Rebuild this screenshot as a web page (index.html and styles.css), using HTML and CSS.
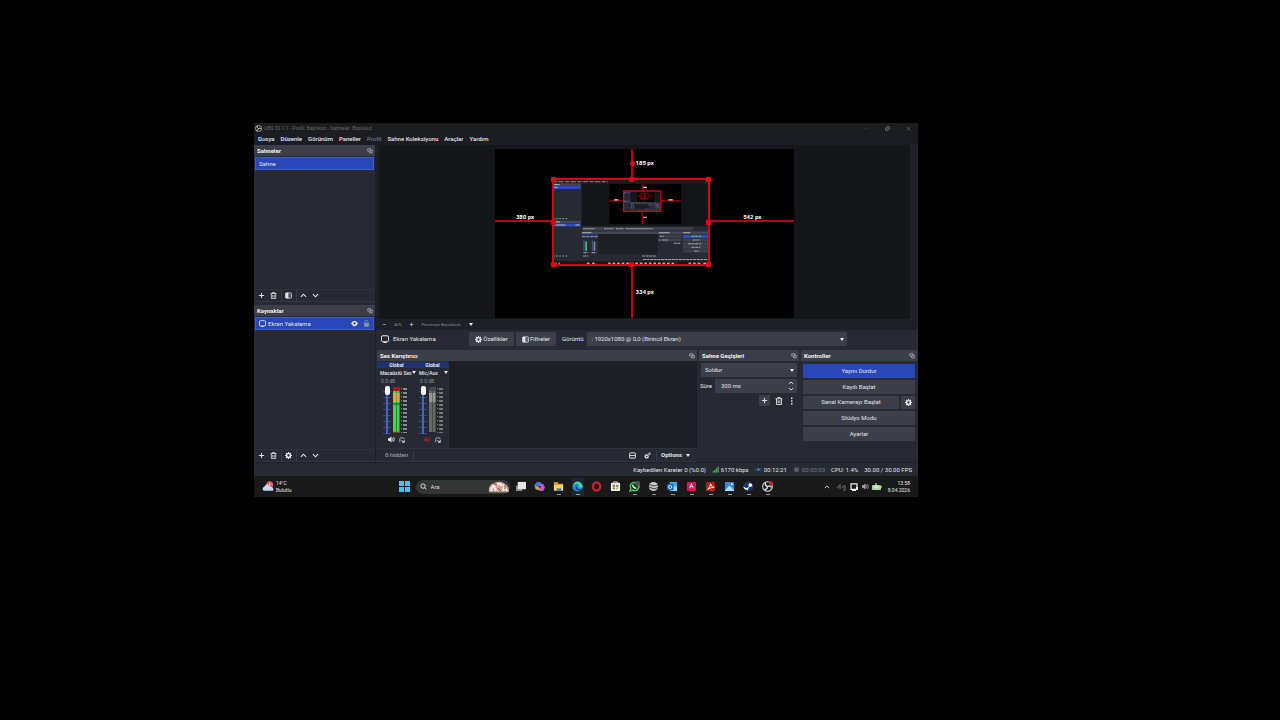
FILE: index.html
```html
<!DOCTYPE html>
<html lang="tr">

<head>
  <meta charset="UTF-8" />
  <title>OBS Studio</title>
  <link rel="stylesheet" href="styles.css">
</head>

<body>
  <!-- shared icons -->
  <svg class="sprite" aria-hidden="true">
    <symbol id="plus" viewBox="0 0 16 16"><path d="M8 2v12M2 8h12" stroke="currentColor" stroke-width="2.2" /></symbol>
    <symbol id="trash" viewBox="0 0 16 16"><path d="M1 3.5h14M5.5 3V1h5v2M3 4v11h10V4M6.3 6.5v6M9.7 6.5v6" fill="none" stroke="currentColor" stroke-width="1.8" /></symbol>
    <symbol id="filter" viewBox="0 0 16 16"><rect x="1" y="2" width="14" height="12" rx="2" fill="none" stroke="currentColor" stroke-width="1.8" /><path d="M2 2h6v12H2z" fill="currentColor" /><path d="M10 5h3M10 8h3M10 11h3" stroke="currentColor" /></symbol>
    <symbol id="up" viewBox="0 0 16 16"><path d="M2 11l6-6 6 6" fill="none" stroke="currentColor" stroke-width="2.4" /></symbol>
    <symbol id="down" viewBox="0 0 16 16"><path d="M2 5l6 6 6-6" fill="none" stroke="currentColor" stroke-width="2.4" /></symbol>
    <symbol id="gear" viewBox="0 0 16 16"><circle cx="8" cy="8" r="4.3" fill="none" stroke="currentColor" stroke-width="3.4" /><path d="M8 0v3M8 13v3M0 8h3M13 8h3M2.3 2.3l2 2M11.7 11.7l2 2M13.7 2.3l-2 2M4.3 11.7l-2 2" stroke="currentColor" stroke-width="2.6" /></symbol>
    <symbol id="gears" viewBox="0 0 16 16"><circle cx="6" cy="10" r="3.5" fill="none" stroke="currentColor" stroke-width="3" /><circle cx="12.5" cy="4" r="2" fill="none" stroke="currentColor" stroke-width="2" /></symbol>
    <symbol id="popout" viewBox="0 0 16 16"><path d="M2 2h8v6H2zM7 8v5h7V6h-4" fill="none" stroke="currentColor" stroke-width="2" /></symbol>
    <symbol id="monitor" viewBox="0 0 16 16"><rect x="1" y="1.5" width="14" height="12" rx="2.5" fill="none" stroke="currentColor" stroke-width="2" /><path d="M5 15h6" stroke="currentColor" stroke-width="2" /></symbol>
    <symbol id="eye" viewBox="0 0 16 16"><path d="M0 8q8-13 16 0q-8 13-16 0z" fill="currentColor" /><circle cx="8" cy="8" r="2.6" fill="#2a47b8" /></symbol>
    <symbol id="lock" viewBox="0 0 16 16"><path d="M4.5 8V4.500a3.500 3.500 0 0 1 7 0V8" fill="none" stroke="currentColor" stroke-width="2" /><rect x="2.500" y="7" width="11" height="8.500" rx="1" fill="currentColor" /></symbol>
    <symbol id="dots" viewBox="0 0 16 16"><path d="M6 1h3v3H6zM6 6.500h3v3H6zM6 12h3v3H6z" fill="currentColor" /></symbol>
    <symbol id="speaker" viewBox="0 0 16 16"><path d="M0 5h3l5-4v14l-5-4H0z" fill="currentColor" /><path d="M10 5q2 3 0 6M12.500 2.500q4 5.500 0 11" fill="none" stroke="currentColor" stroke-width="1.800" /></symbol>
    <symbol id="headphones" viewBox="0 0 16 16"><path d="M2 14V6q0-4 4-4h4q4 0 4 4" fill="none" stroke="currentColor" stroke-width="1.800" /><path d="M6 9l8 5M14 8v6H8" fill="none" stroke="currentColor" stroke-width="2.200" /></symbol>
    <symbol id="layout" viewBox="0 0 16 16"><rect x="1.500" y="2" width="13" height="12" rx="1" fill="none" stroke="currentColor" stroke-width="2.200" /><path d="M2 8h12" stroke="currentColor" stroke-width="2" /></symbol>
    <symbol id="obs" viewBox="0 0 16 16"><circle cx="8" cy="8" r="7" fill="#151515" stroke="#ddd" stroke-width="1.500" /><path d="M8 8Q4 7 5 2.500M8 8q4-2 6 1.500M8 8q0 4-4.500 4.500" fill="none" stroke="#ddd" stroke-width="2" /></symbol>
  </svg>

  <div class="desktop">
    <header class="titlebar">
      <svg class="icon"><use href="#obs" /></svg>
      <span class="title">OBS 32.1.1 - Profil: Başlıksız - Sahneler: Başlıksız</span>
      <button class="win-btn" aria-label="Simge durumu"><svg viewBox="0 0 8 8"><path d="M1 4h6" stroke="#333" /></svg></button>
      <button class="win-btn" aria-label="Önceki boyut"><svg viewBox="0 0 8 8"><path d="M1 3h4v4H1zM3 1h4v4" fill="none" stroke="#999" /></svg></button>
      <button class="win-btn" aria-label="Kapat"><svg viewBox="0 0 8 8"><path d="M1 1l6 6M7 1L1 7" stroke="#777" /></svg></button>
    </header>

    <nav class="menubar">
      <a href="#">Dosya</a>
      <a href="#">Düzenle</a>
      <a href="#">Görünüm</a>
      <a href="#">Paneller</a>
      <a href="#" class="dim">Profil</a>
      <a href="#">Sahne Koleksiyonu</a>
      <a href="#">Araçlar</a>
      <a href="#">Yardım</a>
    </nav>

    <main class="workspace">
      <aside class="sidebar">
        <section class="dock">
          <h2 class="dock-head">Sahneler <svg class="icon-sm"><use href="#popout" /></svg></h2>
          <div class="list"><button class="row">Sahne</button></div>
          <div class="toolbar">
            <button aria-label="Sahne ekle"><svg class="icon"><use href="#plus" /></svg></button>
            <button aria-label="Sahneyi sil"><svg class="icon"><use href="#trash" /></svg></button>
            <button class="split" aria-label="Filtreler"><svg class="icon"><use href="#filter" /></svg></button>
            <button class="split" aria-label="Yukarı"><svg class="icon"><use href="#up" /></svg></button>
            <button aria-label="Aşağı"><svg class="icon"><use href="#down" /></svg></button>
          </div>
        </section>
        <section class="dock">
          <h2 class="dock-head">Kaynaklar <svg class="icon-sm"><use href="#popout" /></svg></h2>
          <div class="list">
            <div class="row source">
              <svg class="icon"><use href="#monitor" /></svg>
              <span class="grow">Ekran Yakalama</span>
              <button aria-label="Görünürlük"><svg class="icon"><use href="#eye" /></svg></button>
              <button class="lock" aria-label="Kilit"><svg class="icon"><use href="#lock" /></svg></button>
            </div>
          </div>
          <div class="toolbar">
            <button aria-label="Kaynak ekle"><svg class="icon"><use href="#plus" /></svg></button>
            <button aria-label="Kaynağı sil"><svg class="icon"><use href="#trash" /></svg></button>
            <button class="split" aria-label="Özellikler"><svg class="icon"><use href="#gear" /></svg></button>
            <button class="split" aria-label="Yukarı"><svg class="icon"><use href="#up" /></svg></button>
            <button aria-label="Aşağı"><svg class="icon"><use href="#down" /></svg></button>
          </div>
        </section>
      </aside>

      <div class="stage">
        <div class="preview">
          <div class="canvas">
            <div class="guide-x"></div>
            <div class="guide-y"></div>
            <!-- captured screen, repeated inside itself -->
            <svg class="capture" viewBox="0 0 664 374" preserveAspectRatio="none">
              <symbol id="shot" viewBox="0 0 664 374" preserveAspectRatio="none">
                <rect width="664" height="374" fill="#272a33" />
                <rect width="664" height="23" fill="#1b1d21" />
                <path d="M4 16h230" stroke="#999" stroke-width="4" stroke-dasharray="17 5 23 6" />
                <rect x="124" y="23" width="540" height="182" fill="#131519" />
                <rect x="241" y="26" width="299" height="169" />
                <path d="M0 28h120M0 187h120" stroke="#454854" stroke-width="10" />
                <path d="M0 40h120M0 200h120" stroke="#3049bb" stroke-width="13" />
                <path d="M4 28h28M4 187h30M6 40h18M12 200h44M98 200h18" stroke="#bbb" stroke-width="4" />
                <path d="M4 173h60M4 332h60" stroke="#aaa" stroke-width="4" stroke-dasharray="7 6" />
                <path d="M130 216h460" stroke="#3c404d" stroke-width="14" />
                <path d="M130 216h50M218 216h40M268 216h32M308 216h115" stroke="#aaa" stroke-width="4" stroke-dasharray="9 2" />
                <rect x="195" y="239" width="248" height="85" fill="#1d1f24" />
                <path d="M124 233h540" stroke="#454854" stroke-width="10" />
                <path d="M126 233h40M448 233h44M550 233h30" stroke="#bbb" stroke-width="4" />
                <path d="M124 243h70" stroke="#213889" stroke-width="7" />
                <path d="M134 265v46M169 265v46" stroke="#496bd8" stroke-width="3" />
                <path d="M143 270v40" stroke="#45c95b" stroke-width="7" />
                <path d="M178 270v40" stroke="#888" stroke-width="7" />
                <path d="M126 250h65M132 318h20M166 318h20M130 332h22" stroke="#aaa" stroke-width="4" stroke-dasharray="14 3" />
                <path d="M450 248h94M462 264h80M549 264h113M549 280h113M549 295h113M549 311h113" stroke="#3c404d" stroke-width="13" />
                <path d="M549 248h113" stroke="#3049bb" stroke-width="14" />
                <path d="M451 248h18M446 264h40M585 248h40M590 264h32M570 280h56M585 295h36M596 311h20M510 278h30M378 332h60M382 347h276" stroke="#aaa" stroke-width="4" stroke-dasharray="12 3" />
                <rect y="354" width="664" height="20" fill="#181818" />
                <path d="M8 364h24M146 364h12M168 364h20M235 364h286M572 364h50M634 364h24" stroke="#aaa" stroke-width="8" stroke-dasharray="11 8" />
              </symbol>
              <use href="#shot" width="664" height="374" />
              <path d="M378 26v169M241 97h299" stroke="#e00016" stroke-width="4" />
              <path d="M382 40h16M382 167h16M260 93h18M488 93h18" stroke="#ddd" stroke-width="5" />
              <use href="#shot" x="300" y="55" width="156" height="87" />
              <rect x="300" y="55" width="156" height="87" fill="none" stroke="#e00016" stroke-width="5" />
              <rect x="356" y="61" width="70" height="39" />
              <path d="M388 61v39M356 77h70M370 67h36v20h-36z" fill="none" stroke="#a00016" stroke-width="3" />
            </svg>
            <div class="selection">
              <i class="handle n"></i><i class="handle s"></i><i class="handle w"></i><i class="handle e"></i>
              <i class="handle n w"></i><i class="handle n e"></i><i class="handle s w"></i><i class="handle s e"></i>
            </div>
            <i class="rotate"></i>
            <span class="distance top">185 px</span>
            <span class="distance left">380 px</span>
            <span class="distance right">542 px</span>
            <span class="distance bottom">334 px</span>
          </div>
        </div>

        <div class="zoombar">
          <button aria-label="Uzaklaş">−</button>
          <span>46%</span>
          <button aria-label="Yakınlaş">+</button>
          <button class="scale">Pencereye Boyutlandır <span class="caret"></span></button>
        </div>

        <div class="sourcebar">
          <svg class="icon-lg"><use href="#monitor" /></svg>
          <span class="source-name">Ekran Yakalama</span>
          <button class="btn props"><svg class="icon"><use href="#gear" /></svg>Özellikler</button>
          <button class="btn filters"><svg class="icon"><use href="#filter" /></svg>Filtreler</button>
          <label for="display">Görüntü</label>
          <div class="select display">
            <select id="display"><option>: 1920x1080 @ 0,0 (Birincil Ekran)</option></select>
            <span class="caret"></span>
          </div>
        </div>

        <div class="docks">
          <section class="dock mixer">
            <h2 class="dock-head">Ses Karıştırıcı <svg class="icon-sm"><use href="#popout" /></svg></h2>
            <div class="channels">
              <div class="channel">
                <div class="global">Global</div>
                <button class="channel-name">Masaüstü Ses <span class="caret"></span></button>
                <span class="db">0.0 dB</span>
                <div class="levels">
                  <input type="range" class="fader" min="0" max="100" value="100" aria-label="Masaüstü Ses">
                  <svg class="meter" viewBox="0 0 18 48">
                    <path d="M0 2h3v44H0zM3.500 2h3v44h-3z" fill="#37dc4b" />
                    <path d="M0 7h3v9H0zM3.500 7h3v9h-3z" fill="#e0a92d" />
                    <path d="M0 1h7v4H0z" fill="#b5101e" />
                    <path d="M0 18h7" stroke="#1d5520" />
                    <path d="M0 46h7" stroke="#b5601e" />
                    <path d="M8.500 2v45" stroke="#888" stroke-width="1" stroke-dasharray="1 3" />
                    <path d="M12 2v45" stroke="#888" stroke-width="4" stroke-dasharray="2 2" />
                  </svg>
                </div>
                <div class="channel-tools">
                  <button aria-label="Sessiz"><svg class="icon"><use href="#speaker" /></svg></button>
                  <button aria-label="İzleme"><svg class="icon-sm"><use href="#headphones" /></svg></button>
                </div>
              </div>
              <div class="channel">
                <div class="global">Global</div>
                <button class="channel-name">Mic/Aux <span class="caret"></span></button>
                <span class="db">0.0 dB</span>
                <div class="levels">
                  <input type="range" class="fader" min="0" max="100" value="100" aria-label="Mic/Aux">
                  <svg class="meter" viewBox="0 0 18 48">
                    <path d="M0 2h3v44H0zM3.500 2h3v44h-3z" fill="#686969" />
                    <path d="M0 7h3v9H0zM3.500 7h3v9h-3z" fill="#969696" />
                    <path d="M0 1h7v4H0z" fill="#484848" />
                    <path d="M8.500 2v45" stroke="#777" stroke-width="1" stroke-dasharray="1 3" />
                    <path d="M12 2v45" stroke="#777" stroke-width="4" stroke-dasharray="2 2" />
                  </svg>
                </div>
                <div class="channel-tools">
                  <button class="muted" aria-label="Sessiz"><svg class="icon"><use href="#speaker" /></svg></button>
                  <button aria-label="İzleme"><svg class="icon-sm"><use href="#headphones" /></svg></button>
                </div>
              </div>
            </div>
            <div class="toolbar">
              <button class="hidden-count">0 hidden</button>
              <button class="push" aria-label="Düzen"><svg class="icon"><use href="#layout" /></svg></button>
              <button aria-label="Gelişmiş ses"><svg class="icon"><use href="#gears" /></svg></button>
              <button class="options">Options <span class="caret"></span></button>
            </div>
          </section>

          <section class="dock transitions">
            <h2 class="dock-head">Sahne Geçişleri <svg class="icon-sm"><use href="#popout" /></svg></h2>
            <div class="select">
              <select aria-label="Geçiş"><option>Soldur</option></select>
              <span class="caret"></span>
            </div>
            <div class="duration">
              <label for="duration">Süre</label>
              <div class="spin">
                <input id="duration" type="text" value="300 ms">
                <span class="arrows"><svg><use href="#up" /></svg><svg><use href="#down" /></svg></span>
              </div>
            </div>
            <div class="transition-tools">
              <button class="boxed" aria-label="Geçiş ekle"><svg class="icon"><use href="#plus" /></svg></button>
              <button aria-label="Geçişi sil"><svg class="icon-lg"><use href="#trash" /></svg></button>
              <button aria-label="Menü"><svg class="icon-lg"><use href="#dots" /></svg></button>
            </div>
          </section>

          <section class="dock controls">
            <h2 class="dock-head">Kontroller <svg class="icon-sm"><use href="#popout" /></svg></h2>
            <div class="control-list">
              <button class="btn active">Yayını Durdur</button>
              <button class="btn">Kaydı Başlat</button>
              <div class="pair">
                <button class="btn">Sanal Kamerayı Başlat</button>
                <button class="btn" aria-label="Sanal kamera ayarları"><svg class="icon"><use href="#gear" /></svg></button>
              </div>
              <button class="btn">Stüdyo Modu</button>
              <button class="btn">Ayarlar</button>
            </div>
          </section>
        </div>
      </div>
    </main>

    <footer class="statusbar">
      <span>Kaybedilen Kareler 0 (%0.0)</span>
      <span><svg class="icon" viewBox="0 0 16 16"><path d="M2 15v-3M6 15V9M10 15V5M14 15V1" stroke="#36b84d" stroke-width="3" /></svg>6170 kbps</span>
      <span><svg class="icon" viewBox="0 0 16 16"><circle cx="8" cy="8" r="3" fill="#3b8ed0" /><path d="M3 4q-3 4 0 8M13 4q3 4 0 8" fill="none" stroke="#285b8a" stroke-width="2" /></svg>00:12:21</span>
      <span class="dim"><svg class="icon" viewBox="0 0 16 16"><circle cx="8" cy="8" r="6" fill="#555861" /></svg>00:00:00</span>
      <span>CPU: 1.4%</span>
      <span>30.00 / 30.00 FPS</span>
    </footer>

    <div class="taskbar">
      <div class="weather">
        <svg viewBox="0 0 14 12"><circle cx="9" cy="4" r="4" fill="#e45b62" /><path d="M2 11Q-1 8 3 6q3-5 6 0q5 0 4 5z" fill="#c7d8f4" /><path d="M9 2v3" stroke="#fff" /></svg>
        <div>14°C<br>Bulutlu</div>
      </div>
      <div class="apps">
        <button aria-label="Başlat"><svg viewBox="0 0 12 12"><path d="M0 0h5.500v5.500H0zM6.500 0H12v5.500H6.500zM0 6.500h5.500V12H0zM6.500 6.500H12V12H6.500z" fill="#45c0f2" /></svg></button>
        <label class="search">
          <svg class="icon" viewBox="0 0 16 16"><circle cx="7" cy="7" r="5" fill="none" stroke="#eee" stroke-width="2" /><path d="M10.500 10.500l4 4" stroke="#eee" stroke-width="2" /></svg>
          <input type="text" placeholder="Ara" aria-label="Ara">
          <svg class="lion" viewBox="0 0 22 12"><path d="M1 11Q0 4 6 2q6-3 11 1q4 2 4 8z" fill="#d7a29b" /><path d="M3 10q1-5 3-5l2 5M9 4q3-3 5 1M15 10l1-5 3 5" fill="none" stroke="#f1efe6" stroke-width="2" /><path d="M5 2l4 2M10 7l3 3M17 4v4" stroke="#764a3b" /><path d="M2 11h18" stroke="#779b65" /></svg>
        </label>
        <button aria-label="Görev görünümü"><svg viewBox="0 0 12 12"><path d="M1 5h7v6H1z" fill="#888" /><path d="M3 1h9v8H3z" fill="#e5e5e5" /></svg></button>
        <button aria-label="Copilot"><svg viewBox="0 0 12 12"><path d="M3 1h4l2 4-3 4H2L0 5z" fill="#3479d6" /><path d="M6 3h4l2 4-2 4H6L4 8z" fill="#b65bc5" /><path d="M1 6l4 0 1 4-4-1z" fill="#e6a336" /><path d="M4 5l4 1-2 2z" fill="#282b46" /></svg></button>
        <button class="open" aria-label="Dosya Gezgini"><svg viewBox="0 0 12 12"><path d="M1 1h4l1 2h5v8H1z" fill="#d99418" /><path d="M1 4h10v6H1z" fill="#ffd465" /><path d="M4 8h5v3H4z" fill="#2f81cf" /></svg></button>
        <button class="open current" aria-label="Edge"><svg viewBox="0 0 12 12"><circle cx="6" cy="6" r="5.500" fill="#2389d4" /><path d="M1 5q2-5 7-4 4 2 3.500 6H7q1-4-2-4-3 0-4 3z" fill="#4cd0a1" /><path d="M5 6q-1 4 5 4" fill="none" stroke="#103c68" stroke-width="1.500" /></svg></button>
        <button aria-label="Opera"><svg viewBox="0 0 12 12"><ellipse cx="6" cy="6" rx="4" ry="4.500" fill="none" stroke="#d91832" stroke-width="2.500" /></svg></button>
        <button aria-label="Store"><svg viewBox="0 0 12 12"><path d="M4 3V1h4v2" fill="none" stroke="#ddd" /><rect x="1" y="2" width="10" height="9" rx="1" fill="#eee" /><path d="M3 4h2.500v2.500H3z" fill="#e85a43" /><path d="M6.500 4H9v2.500H6.500z" fill="#62ad4b" /><path d="M3 7h2.500v2H3z" fill="#3b9adb" /><path d="M6.500 7H9v2H6.500z" fill="#ebb52f" /></svg></button>
        <button class="open" aria-label="WhatsApp"><svg viewBox="0 0 12 12"><path d="M1 11l1-3Q0 3 5 1.500q6 0 6 5Q9 12 4 10z" fill="#173d25" stroke="#33d268" stroke-width="1.500" /><path d="M4 4q0 3 4 4" fill="none" stroke="#eee" stroke-width="1.500" /><circle cx="9.500" cy="2.500" r="2.500" fill="#555" /></svg></button>
        <button class="open" aria-label="Steam aracı"><svg viewBox="0 0 12 12"><circle cx="6" cy="6" r="5" fill="#c9c9c9" /><path d="M1 3q4 4 10 1M1 6q5 4 10 1" fill="none" stroke="#303030" /></svg></button>
        <button class="open" aria-label="Outlook"><svg viewBox="0 0 12 12"><path d="M3 1h8v10H3z" fill="#43a8e5" /><path d="M6 6h5v5H4z" fill="#93d3f7" /><rect y="3" width="7" height="7" rx="1" fill="#1262b3" /><circle cx="3.500" cy="6.500" r="1.700" fill="none" stroke="#fff" /></svg></button>
        <button class="open" aria-label="Access"><svg viewBox="0 0 12 12"><rect x="1" y="1" width="10" height="10" rx="1" fill="#d51750" /><path d="M4 8l2-5 2 5M5 6h2" fill="none" stroke="#fff" /></svg></button>
        <button class="open" aria-label="Acrobat"><svg viewBox="0 0 12 12"><rect x="1" y="1" width="10" height="10" rx="1" fill="#bd1717" /><path d="M3 9q3-3 3-6 1 4 4 4-4 0-7 2z" fill="none" stroke="#fff" /></svg></button>
        <button class="open" aria-label="Fotoğraflar"><svg viewBox="0 0 12 12"><rect x="1" y="1" width="10" height="10" rx="1" fill="#338bd8" /><path d="M1 10l5-5 5 5v1H1z" fill="#a8dbff" /><circle cx="8.500" cy="3.500" r="1" fill="#fff" /></svg></button>
        <button class="open" aria-label="Steam"><svg viewBox="0 0 12 12"><circle cx="6" cy="6" r="5.500" fill="#123b69" /><circle cx="8" cy="4.500" r="2" fill="#fff" /><path d="M0 6l4 2 3-2-2 4-3-1z" fill="#fff" /></svg></button>
        <button class="open" aria-label="OBS"><svg viewBox="0 0 16 16"><use href="#obs" /><circle cx="13" cy="3" r="3" fill="#e51622" /></svg></button>
      </div>
      <div class="tray">
        <button aria-label="Gizli simgeler"><svg class="icon-sm"><use href="#up" /></svg></button>
        <svg class="tray-icon" viewBox="0 0 10 8"><path d="M1 5l3-3v4M6 5q2-3 3-2v4H7" fill="none" stroke="#555" stroke-width="1.500" /></svg>
        <svg class="tray-icon" viewBox="0 0 10 8"><path d="M2 0.800h6v5.500H2zM3 7.500h4" fill="none" stroke="#eee" stroke-width="1.200" /><path d="M7 4h2v3H7z" fill="#eee" /></svg>
        <svg class="icon volume"><use href="#speaker" /></svg>
        <svg class="tray-icon" viewBox="0 0 10 8"><rect y="2" width="9" height="5" rx="1" fill="#a5d6a2" /><path d="M2 4h5M4 0v4M9 4h1" stroke="#e5f5df" /></svg>
        <div class="clock">13:58<br>8.04.2026</div>
      </div>
    </div>
  </div>
</body>

</html>
```
FILE: styles.css
```css
* {
  box-sizing: border-box;
}

body {
  margin: 0;
  padding: 123px 362px 0 254px;
  background: #000;
  color: #e4e5e8;
  font-family: Roboto, "Open Sans", sans-serif;
  font-size: 6px;
  line-height: 8px;
}

svg {
  display: block;
  flex: none;
}

button, input, select {
  margin: 0;
  padding: 0;
  border: 0;
  background: none;
  color: inherit;
  font: inherit;
}

button {
  display: flex;
  align-items: center;
  justify-content: center;
}

a {
  color: inherit;
  text-decoration: none;
}

.sprite {
  position: absolute;
  width: 0;
  height: 0;
}

.icon {
  width: 7px;
  height: 7px;
}

.icon-sm {
  width: 6px;
  height: 6px;
}

.icon-lg {
  width: 8px;
  height: 8px;
}

.caret {
  border: 2px solid transparent;
  border-top: 3px solid #eee;
  border-bottom: 0;
}

.dim {
  color: #777a82;
}

.grow {
  flex: 1;
}

.desktop {
  background: #272a33;
}

/* title and menu */
.titlebar {
  display: flex;
  align-items: center;
  height: 10px;
  padding: 0 7px 0 1px;
  background: #1b1c1e;
}

.title {
  flex: 1;
  padding-left: 2px;
  color: #66686b;
  font-size: 5px;
}

.win-btn {
  width: 6px;
  margin-left: 15px;
}

.win-btn svg {
  width: 5px;
  height: 5px;
}

.menubar {
  display: flex;
  align-items: center;
  gap: 6px;
  height: 12px;
  padding: 0 4px;
  background: #1b1d22;
  font-weight: 500;
}

/* main area */
.workspace {
  display: flex;
  height: 317px;
}

.sidebar {
  display: flex;
  flex-direction: column;
  gap: 3px;
  width: 122px;
  border-right: 1px solid #1e2027;
}

.sidebar .dock {
  flex: 1;
}

.dock {
  display: flex;
  flex-direction: column;
}

.dock-head {
  display: flex;
  align-items: center;
  justify-content: space-between;
  height: 11px;
  margin: 0;
  padding: 0 2px 0 3px;
  background: #3c3f4a;
  color: #f4f4f6;
  font-size: 6px;
  font-weight: 700;
}

.dock-head svg {
  color: #b5b6bb;
}

.list {
  flex: 1;
  padding: 1px;
}

.row {
  display: flex;
  align-items: center;
  justify-content: flex-start;
  gap: 3px;
  width: 100%;
  height: 13px;
  padding: 0 3px;
  border: 1px solid #3f5dce;
  background: #2a47b8;
}

.source {
  gap: 2px;
}

.lock {
  margin-left: 3px;
  color: #8b91aa;
}

.toolbar {
  display: flex;
  align-items: center;
  height: 13px;
  padding-left: 3px;
  border-top: 1px solid #30333c;
  border-bottom: 1px solid #343741;
}

.toolbar button {
  width: 8px;
  height: 11px;
  margin-right: 4px;
}

.toolbar .split {
  width: 11px;
  padding-left: 2px;
  border-left: 1px solid #393c46;
}

/* preview */
.stage {
  display: flex;
  flex: 1;
  flex-direction: column;
  min-width: 0;
}

.preview {
  display: flex;
  justify-content: center;
  height: 174px;
  padding-top: 4px;
  border-left: 3px solid #1e2027;
  border-right: 8px solid #202229;
  background: #14161a;
}

.canvas {
  position: relative;
  height: 169px;
  aspect-ratio: 299 / 169;
  background: #000;
}

.capture, .selection {
  position: absolute;
  top: 17%;
  left: 19%;
  width: 53%;
  height: 52%;
}

.selection {
  border: 2px solid #d80018;
}

.guide-x, .guide-y {
  position: absolute;
  background: #b80014;
}

.guide-x {
  top: 42%;
  left: 0;
  width: 100%;
  height: 2px;
}

.guide-y {
  top: 0;
  left: 45%;
  width: 2px;
  height: 100%;
  margin-left: 1px;
}

.handle, .rotate {
  position: absolute;
  top: calc(50% - 2px);
  left: calc(50% - 2px);
  width: 5px;
  height: 5px;
  background: #e80018;
}

.handle.n {
  top: -3px;
}

.handle.s {
  top: calc(100% - 2px);
}

.handle.w {
  left: -3px;
}

.handle.e {
  left: calc(100% - 2px);
}

.rotate {
  top: 7%;
  left: 45%;
  border-radius: 50%;
}

.distance {
  position: absolute;
  color: #fff;
  font-weight: 700;
}

.distance.top {
  top: 6%;
  left: 47%;
}

.distance.left {
  top: 38%;
  left: 7%;
}

.distance.right {
  top: 38%;
  left: 83%;
}

.distance.bottom {
  top: 82%;
  left: 47%;
}

.zoombar {
  display: flex;
  align-items: center;
  gap: 8px;
  height: 11px;
  padding-left: 6px;
  background: #1e2027;
  color: #888a90;
  font-size: 4px;
}

.zoombar button:not(.scale) {
  color: #ddd;
  font-size: 7px;
}

.zoombar .scale {
  gap: 8px;
}

.sourcebar {
  display: flex;
  align-items: center;
  height: 18px;
  padding: 0 71px 0 5px;
}

.source-name {
  width: 80px;
  padding-left: 4px;
}

.btn {
  gap: 1px;
  height: 14px;
  border-radius: 1px;
  background: #3c3f4a;
}

.props {
  width: 45px;
}

.filters {
  width: 40px;
  margin: 0 6px 0 2px;
}

.select {
  position: relative;
  height: 14px;
}

.select select {
  width: 100%;
  height: 14px;
  padding: 0 4px;
  border-radius: 1px;
  appearance: none;
  background: #3c3f4a;
}

.select .caret {
  position: absolute;
  top: 6px;
  right: 3px;
}

.display {
  flex: 1;
  margin-left: 4px;
}

/* bottom docks */
.docks {
  display: flex;
  flex: 1;
  gap: 2px;
  padding: 2px 1px 0;
}

.mixer {
  flex: 1;
}

.channels {
  display: flex;
  flex: 1;
  background: #1d1f24;
}

.channel {
  display: flex;
  flex-direction: column;
  width: 39px;
  padding-top: 1px;
  background: #272a33;
}

.channel + .channel {
  width: 33px;
}

.global {
  height: 6px;
  background: #1f3274;
  font-size: 5px;
  font-weight: 700;
  line-height: 6px;
  text-align: center;
}

.channel-name {
  justify-content: space-between;
  height: 9px;
  padding: 0 1px 0 3px;
  font-weight: 500;
  font-size: 5px;
  white-space: nowrap;
}

.db {
  padding-left: 4px;
  color: #8b8d94;
  font-size: 5px;
}

.levels {
  display: flex;
  gap: 2px;
  height: 51px;
  padding: 1px 0 1px 6px;
}

.channel + .channel .levels {
  padding-left: 3px;
}

.fader {
  width: 8px;
  height: 48px;
  appearance: none;
  writing-mode: vertical-lr;
  direction: rtl;
  background: linear-gradient(90deg, transparent 3px, #4264cf 3px, #4264cf 5px, transparent 5px),
    repeating-linear-gradient(transparent 0 5px, #374b8d 5px 6px);
}

.fader::-webkit-slider-thumb {
  width: 5px;
  height: 9px;
  border-radius: 2px;
  appearance: none;
  background: #fff;
}

.meter {
  width: 18px;
  height: 48px;
}

.channel-tools {
  display: flex;
  gap: 4px;
  padding-left: 11px;
}

.channel + .channel .channel-tools {
  padding-left: 8px;
}

.muted {
  color: #96202f;
}

.mixer .toolbar {
  height: 14px;
}

.toolbar .hidden-count {
  width: 34px;
  border-right: 1px solid #393c46;
  color: #999ba2;
  font-weight: 500;
}

.toolbar .push {
  margin-left: auto;
  margin-right: 7px;
}

.toolbar .options {
  gap: 4px;
  width: 38px;
  margin: 0 3px 0 1px;
  border-left: 1px solid #393c46;
  font-weight: 700;
}

.transitions {
  width: 100px;
}

.transitions .select {
  margin: 2px 2px 0;
}

.duration {
  display: flex;
  align-items: center;
  margin: 2px 2px 0 1px;
}

.duration label {
  width: 15px;
}

.spin {
  display: flex;
  flex: 1;
  align-items: center;
  height: 14px;
  border-radius: 1px;
  background: #3c3f4a;
}

.spin input {
  flex: 1;
  width: 0;
  padding-left: 6px;
}

.arrows {
  padding-right: 3px;
}

.arrows svg {
  width: 6px;
  height: 6px;
}

.transition-tools {
  display: flex;
  gap: 4px;
  justify-content: flex-end;
  margin: 2px 3px 0 0;
}

.transition-tools button {
  width: 9px;
  height: 11px;
}

.transition-tools .boxed {
  width: 11px;
  background: #3c3f4a;
}

.controls {
  width: 116px;
}

.control-list {
  display: grid;
  grid-template-rows: repeat(5, 1fr);
  gap: 2px;
  height: 80px;
  padding: 3px 2px 0;
}

.control-list .btn {
  height: 100%;
}

.control-list .active {
  background: #2a47b8;
}

.pair {
  display: grid;
  grid-template-columns: 1fr 14px;
  gap: 2px;
}

/* status bar */
.statusbar {
  display: flex;
  align-items: center;
  justify-content: flex-end;
  gap: 6px;
  height: 14px;
  padding-right: 6px;
  border-top: 1px solid #1e2027;
}

.statusbar span {
  display: flex;
  align-items: center;
  gap: 2px;
}

/* taskbar */
.taskbar {
  display: grid;
  grid-template-columns: 1fr auto 1fr;
  align-items: center;
  height: 21px;
  background: #191919;
  font-size: 5px;
  line-height: 7px;
}

.weather {
  display: flex;
  align-items: center;
  gap: 2px;
  padding-left: 8px;
}

.weather svg {
  width: 12px;
  height: 11px;
}

.apps {
  display: flex;
  align-items: center;
  gap: 7px;
}

.apps button {
  position: relative;
  width: 12px;
  height: 18px;
}

.apps button svg {
  width: 11px;
  height: 11px;
}

.apps .open::after {
  position: absolute;
  bottom: 1px;
  left: 4px;
  width: 4px;
  height: 1px;
  background: #999;
  content: "";
}

.apps .current {
  background: #1d282c;
}

.search {
  display: flex;
  align-items: center;
  gap: 4px;
  width: 94px;
  height: 14px;
  margin: 0 -2px;
  padding-left: 4px;
  border-radius: 7px;
  background: #343535;
}

.search input {
  flex: 1;
  width: 0;
  font-size: 6px;
}

.search input::placeholder {
  color: #ddd;
}

.lion {
  width: 22px;
  height: 12px;
}

.tray {
  display: flex;
  align-items: center;
  justify-content: flex-end;
  gap: 3px;
  padding-right: 8px;
}

.tray button {
  margin-right: 3px;
}

.tray-icon {
  width: 10px;
  height: 8px;
}

.volume {
  color: #aaa;
}

.clock {
  width: 25px;
  text-align: right;
}
```
